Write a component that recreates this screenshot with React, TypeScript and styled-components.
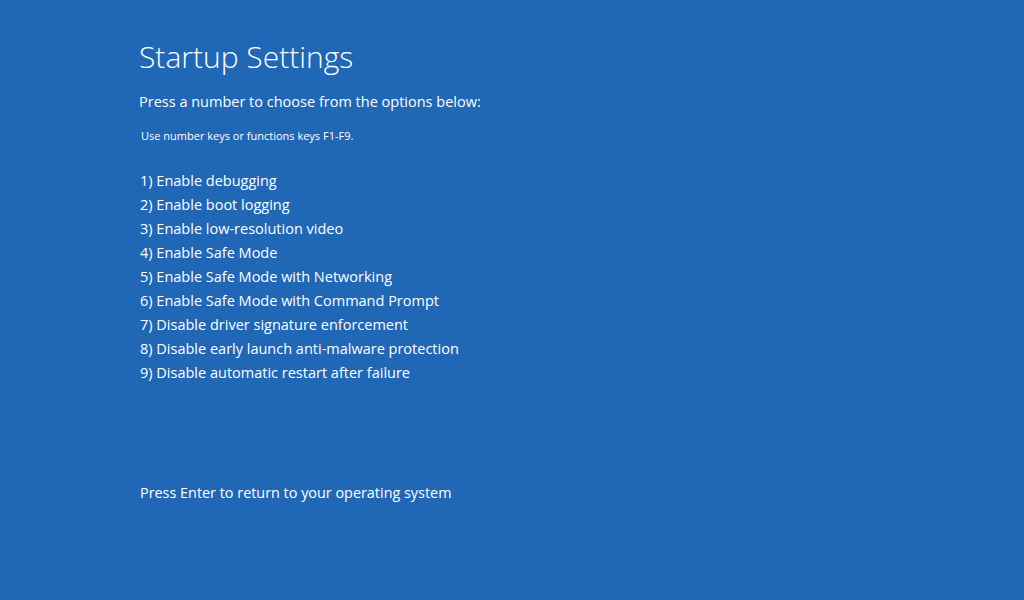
import React from "react";
import styled, {createGlobalStyle} from "styled-components";

const GlobalStyle = createGlobalStyle`
    html, body {
        margin: 0;
        padding: 0;
        background: #2067b5;
    }
    * {
        box-sizing: border-box;
    }
`;

const Screen = styled.div`
    width: 1024px;
    height: 600px;
    background: #2067b5;
    color: #ffffff;
    font-family: "Open Sans", "Noto Sans", sans-serif;
    padding: 37px 0 0 139px;
    display: flex;
    flex-direction: column;
`;

const Title = styled.h1`
    margin: 0;
    font-size: 30px;
    font-weight: 300;
    line-height: 40px;
`;

const Prompt = styled.p`
    margin: 15px 0 0 0;
    font-size: 14.5px;
    line-height: 20px;
`;

const Hint = styled.p`
    margin: 17px 0 0 2px;
    font-size: 11px;
    line-height: 14px;
`;

const Options = styled.ol`
    list-style: none;
    margin: 26px 0 0 1px;
    padding: 0;
`;

const Option = styled.li`
    font-size: 14.5px;
    line-height: 24px;
`;

const Footer = styled.p`
    margin: 96px 0 0 1px;
    font-size: 14.4px;
    line-height: 24px;
`;

const options = [
    "Enable debugging",
    "Enable boot logging",
    "Enable low-resolution video",
    "Enable Safe Mode",
    "Enable Safe Mode with Networking",
    "Enable Safe Mode with Command Prompt",
    "Disable driver signature enforcement",
    "Disable early launch anti-malware protection",
    "Disable automatic restart after failure",
];

function App() {
    return (
        <>
            <GlobalStyle/>
            <Screen>
                <Title>Startup Settings</Title>
                <Prompt>Press a number to choose from the options below:</Prompt>
                <Hint>Use number keys or functions keys F1-F9.</Hint>
                <Options>
                    {options.map((text, i) => (
                        <Option key={text}>{i + 1}) {text}</Option>
                    ))}
                </Options>
                <Footer>Press Enter to return to your operating system</Footer>
            </Screen>
        </>
    );
}

export default App;
